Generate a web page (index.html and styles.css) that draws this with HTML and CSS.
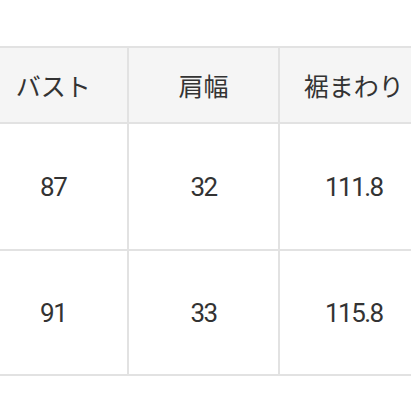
FILE: index.html
```html
<!DOCTYPE html>
<html lang="ja">
<head>
<meta charset="utf-8">
<link rel="stylesheet" href="styles.css">
</head>
<body>
<table class="size-table">
  <thead>
    <tr><th>バスト</th><th>肩幅</th><th>裾まわり</th></tr>
  </thead>
  <tbody>
    <tr><td>87</td><td>32</td><td>111.8</td></tr>
    <tr><td>91</td><td>33</td><td>115.8</td></tr>
  </tbody>
</table>
</body>
</html>
```
FILE: styles.css
```css
html, body {
  margin: 0;
  padding: 0;
  background: #ffffff;
  overflow: hidden;
}
body {
  width: 411px;
  height: 411px;
  font-family: Roboto, "Noto Sans CJK JP", sans-serif;
  color: #333333;
}
.size-table {
  margin-top: 46px;
  margin-left: -23px;
  border-collapse: collapse;
  table-layout: fixed;
  width: 453px;
}
.size-table th,
.size-table td {
  border: 2px solid #e2e2e2;
  text-align: center;
  vertical-align: middle;
  font-weight: 400;
  padding: 0;
}
.size-table th {
  background: #f5f5f5;
  height: 74px;
  font-family: "Noto Sans CJK JP", sans-serif;
  font-size: 25px;
}
.size-table td {
  height: 125px;
  font-size: 26px;
  letter-spacing: -1.5px;
}
.size-table tbody tr:last-child td {
  height: 123px;
}
```
